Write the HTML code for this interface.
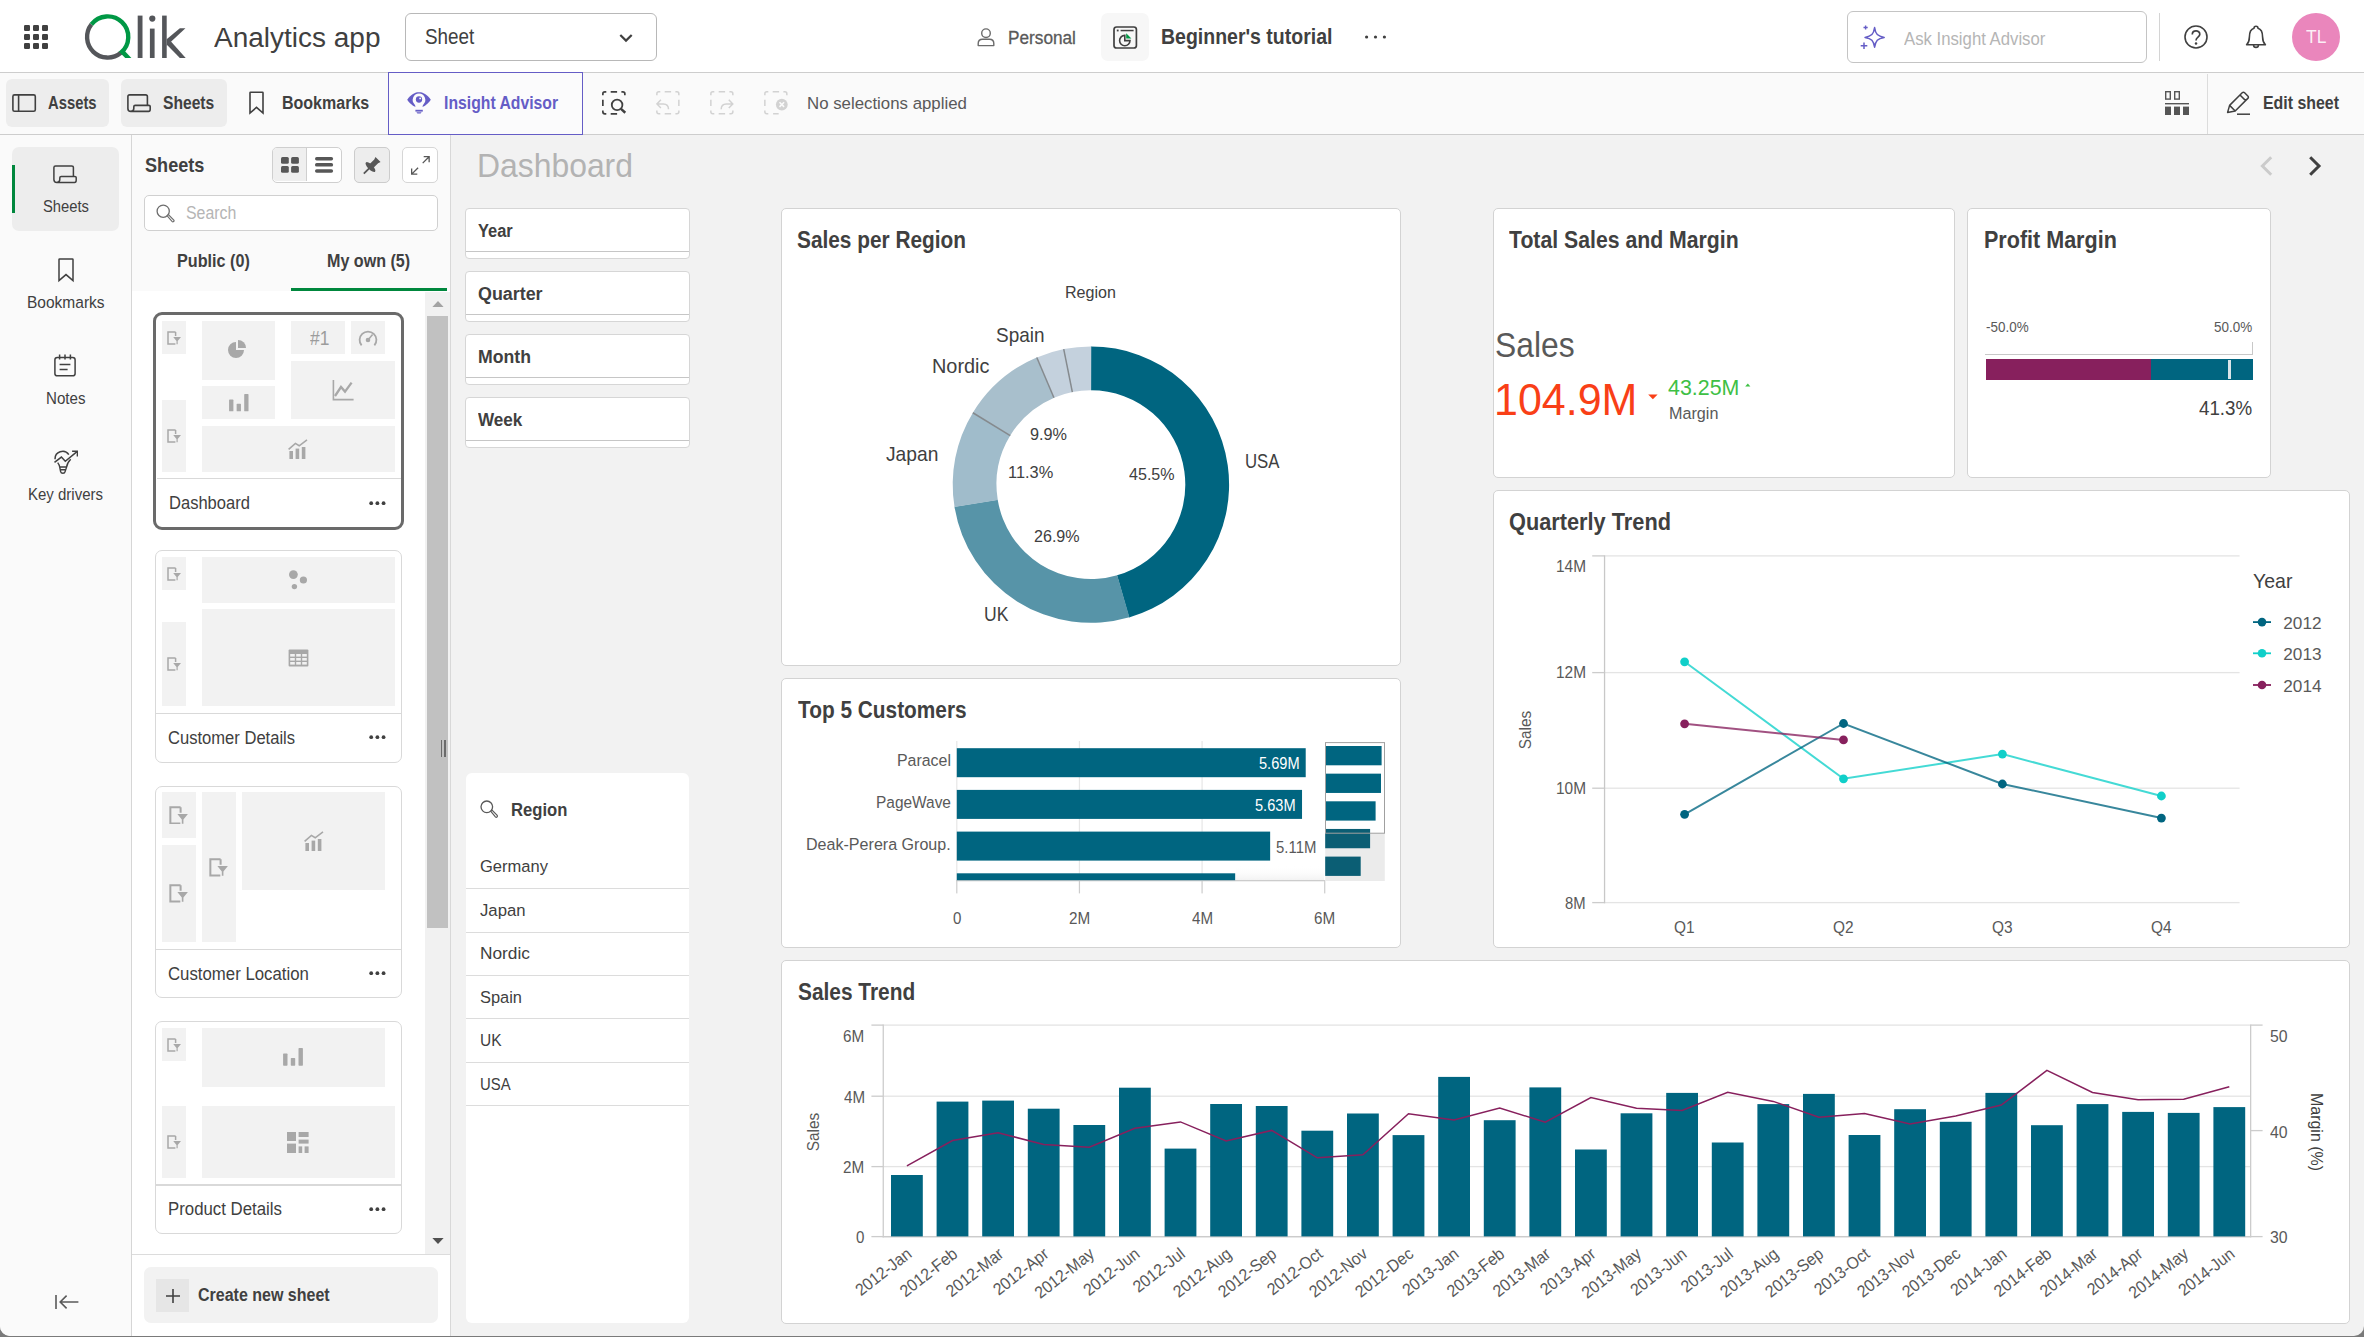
<!DOCTYPE html><html><head><meta charset="utf-8"><title>Qlik Sense - Dashboard</title><style>html,body{margin:0;padding:0;}
body{width:2364px;height:1337px;overflow:hidden;background:#7a7a7a;font-family:"Liberation Sans",sans-serif;position:relative;}
#app{position:absolute;left:0;top:0;width:2364px;height:1335.6px;overflow:hidden;background:#f2f2f2;border-radius:0 0 10px 10px;}
.a{position:absolute;display:block;}
.t{position:absolute;display:block;white-space:nowrap;line-height:40px;transform-origin:0 50%;}
</style></head><body><div id="app">
<div class="a" style="left:0.00px;top:0.00px;width:2364.00px;height:72.00px;background:#fff;"></div>
<div class="a" style="left:0.00px;top:72.00px;width:2364.00px;height:1.00px;background:#cdcdcd;"></div>
<svg class="a" style="left:24.00px;top:25.40px;" width="24.00" height="24.00" viewBox="0 0 24 24"><rect x="0" y="0" width="6" height="6" rx="1.2" fill="#404040"/><rect x="9" y="0" width="6" height="6" rx="1.2" fill="#404040"/><rect x="18" y="0" width="6" height="6" rx="1.2" fill="#404040"/><rect x="0" y="9" width="6" height="6" rx="1.2" fill="#404040"/><rect x="9" y="9" width="6" height="6" rx="1.2" fill="#404040"/><rect x="18" y="9" width="6" height="6" rx="1.2" fill="#404040"/><rect x="0" y="18" width="6" height="6" rx="1.2" fill="#404040"/><rect x="9" y="18" width="6" height="6" rx="1.2" fill="#404040"/><rect x="18" y="18" width="6" height="6" rx="1.2" fill="#404040"/></svg>
<svg class="a" style="left:85.40px;top:15.00px;overflow:visible;" width="105.00" height="46.00" viewBox="0 0 105 46">
<path d="M35.89 37.78 A20.6 20.6 0 0 1 6.42 9.32" fill="none" stroke="#54565a" stroke-width="4.4"/>
<path d="M6.42 9.32 A20.6 20.6 0 1 1 35.89 37.78" fill="none" stroke="#009845" stroke-width="4.4"/>
<path d="M33.5 36.2 L39.78 36.0 L46.38 43 H40.29 Z" fill="#009845"/>
<rect x="52.7" y="0.6" width="4.8" height="42.4" fill="#54565a"/>
<rect x="64.9" y="13.6" width="4.7" height="29.4" fill="#54565a"/>
<circle cx="67.3" cy="3.6" r="3.1" fill="#54565a"/>
<rect x="77.1" y="0.6" width="4.6" height="42.4" fill="#54565a"/>
<path d="M81.66 24.22 L94.85 13.3 H100.44 L81.66 30.82 Z" fill="#54565a"/>
<path d="M81.66 29.55 L85.97 26.5 L100.69 43 H94.85 Z" fill="#54565a"/>
</svg>
<span class="t" style="left:213.50px;top:17px;font-size:28.40px;color:#404040;transform:scaleX(0.9857);">Analytics app</span>
<div class="a" style="left:405.00px;top:13.00px;width:252.00px;height:48.00px;background:#fff;border:1.3px solid #b8b8b8;border-radius:6px;box-sizing:border-box;"></div>
<span class="t" style="left:424.50px;top:17px;font-size:21.20px;color:#404040;transform:scaleX(0.8899);">Sheet</span>
<svg class="a" style="left:618.00px;top:32.00px;" width="16.00" height="12.00" viewBox="0 0 16 12"><path d="M2.3 3 L8 8.6 L13.7 3" fill="none" stroke="#404040" stroke-width="2.2"/></svg>
<svg class="a" style="left:975.00px;top:26.00px;" width="22.00" height="22.00" viewBox="0 0 22 22"><circle cx="11" cy="7.2" r="4.3" fill="none" stroke="#6b6b6b" stroke-width="1.4"/><path d="M3.2 19.6 V17.5 Q3.2 13.2 7.5 13.2 H14.5 Q18.8 13.2 18.8 17.5 V19.6 Z" fill="none" stroke="#6b6b6b" stroke-width="1.4" stroke-linejoin="round"/></svg>
<span class="t" style="left:1008.00px;top:18px;font-size:18.30px;color:#595959;transform:scaleX(0.9415);-webkit-text-stroke:0.3px #595959;">Personal</span>
<div class="a" style="left:1101.00px;top:13.00px;width:48.00px;height:48.00px;background:#f7f7f7;border-radius:7px;"></div>
<svg class="a" style="left:1113.00px;top:26.00px;" width="25.00" height="24.00" viewBox="0 0 25 24"><rect x="1" y="1" width="22.4" height="21" rx="2.6" fill="none" stroke="#404040" stroke-width="1.7"/>
<rect x="3.8" y="3.6" width="1.8" height="1.8" fill="#404040"/><rect x="7.6" y="3.8" width="13" height="1.5" fill="#404040"/>
<path d="M11.8 9.4 A5.2 5.2 0 1 0 17 14.6 H11.8 Z" fill="none" stroke="#404040" stroke-width="1.6"/>
<path d="M13.2 7.2 L18.4 12.6 H13.2 Z" fill="#009845"/></svg>
<span class="t" style="left:1161.00px;top:17px;font-size:21.20px;color:#404040;font-weight:700;transform:scaleX(0.9199);">Beginner's tutorial</span>
<svg class="a" style="left:1364.00px;top:34.00px;" width="24.00" height="6.00" viewBox="0 0 24 6"><circle cx="2.6" cy="3" r="1.6" fill="#404040"/><circle cx="11.5" cy="3" r="1.6" fill="#404040"/><circle cx="20.4" cy="3" r="1.6" fill="#404040"/></svg>
<div class="a" style="left:1847.00px;top:11.00px;width:300.00px;height:51.50px;background:#fff;border:1.3px solid #c4c4c4;border-radius:6px;box-sizing:border-box;"></div>
<svg class="a" style="left:1860.00px;top:24.60px;" width="26.00" height="25.00" viewBox="0 0 26 25"><path d="M14.6 2.6 C15.6 9.2 17.6 11.4 24.2 12.4 C17.6 13.4 15.6 15.6 14.6 22.2 C13.6 15.6 11.6 13.4 5 12.4 C11.6 11.4 13.6 9.2 14.6 2.6 Z" fill="none" stroke="#655dc6" stroke-width="1.5" stroke-linejoin="round"/>
<path d="M4 17.4 V24 M0.7 20.7 H7.3" stroke="#655dc6" stroke-width="1.5" fill="none"/>
<path d="M5.6 0.4 V4.6 M3.5 2.5 H7.7" stroke="#655dc6" stroke-width="1.4" fill="none"/></svg>
<span class="t" style="left:1903.50px;top:19px;font-size:18.30px;color:#b5b5b5;transform:scaleX(0.9152);">Ask Insight Advisor</span>
<div class="a" style="left:2159.00px;top:13.00px;width:1.30px;height:48.00px;background:#d4d4d4;"></div>
<svg class="a" style="left:2184.00px;top:25.00px;" width="24.00" height="24.00" viewBox="0 0 24 24"><circle cx="12" cy="12" r="11" fill="none" stroke="#404040" stroke-width="1.6"/>
<path d="M8.3 9.4 C8.3 4.8 15.8 4.8 15.8 9.2 C15.8 12.2 12 12 12 15.4" fill="none" stroke="#404040" stroke-width="1.7"/><circle cx="12" cy="18.6" r="1.25" fill="#404040"/></svg>
<svg class="a" style="left:2243.50px;top:24.60px;" width="24.00" height="25.00" viewBox="0 0 24 25"><path d="M10 3.2 C10 0.6 14 0.6 14 3.2 C18.4 4.4 18.6 8.6 18.6 12 C18.6 16 19.6 18 21.4 19.8 H2.6 C4.4 18 5.4 16 5.4 12 C5.4 8.6 5.6 4.4 10 3.2 Z" fill="none" stroke="#404040" stroke-width="1.6" stroke-linejoin="round"/>
<path d="M9.6 20 C9.6 23.2 14.4 23.2 14.4 20" fill="none" stroke="#404040" stroke-width="1.6"/></svg>
<div class="a" style="left:2292.00px;top:13.00px;width:48.00px;height:48.00px;background:#ea86bc;border-radius:50%;"></div>
<span class="t" style="left:2305.80px;top:17px;font-size:18.60px;color:rgba(255,255,255,0.88);transform:scaleX(0.9398);">TL</span>
<div class="a" style="left:0.00px;top:73.00px;width:2364.00px;height:61.00px;background:#fafafa;"></div>
<div class="a" style="left:0.00px;top:134.00px;width:2364.00px;height:1.00px;background:#cdcdcd;"></div>
<div class="a" style="left:6.00px;top:79.00px;width:103.00px;height:48.00px;background:#ededed;border-radius:6px;"></div>
<div class="a" style="left:121.00px;top:79.00px;width:106.00px;height:48.00px;background:#ededed;border-radius:6px;"></div>
<svg class="a" style="left:12.00px;top:94.00px;" width="25.00" height="19.00" viewBox="0 0 25 19"><rect x="0.9" y="0.9" width="22.4" height="16.4" rx="1.6" fill="none" stroke="#404040" stroke-width="1.6"/><path d="M6.6 1 V17.2" stroke="#404040" stroke-width="1.6"/></svg>
<span class="t" style="left:48.20px;top:83px;font-size:18.30px;color:#404040;font-weight:700;transform:scaleX(0.8097);">Assets</span>
<svg class="a" style="left:127.00px;top:94.00px;" width="25.00" height="19.00" viewBox="0 0 25 19"><path d="M3.4 17.4 H21.6 Q23.2 17.4 23.2 15.2 V12.6 Q23.2 11.4 21.8 11.4 H8.2 Q6.8 11.4 6.8 12.8 V14.6 Q6.8 17.4 3.8 17.4 Q0.9 17.4 0.9 14.4 V2.6 Q0.9 0.9 2.6 0.9 H18.6 Q20.4 0.9 20.4 2.6 V11.2" fill="none" stroke="#404040" stroke-width="1.6" stroke-linejoin="round"/></svg>
<span class="t" style="left:163.30px;top:83px;font-size:18.30px;color:#404040;font-weight:700;transform:scaleX(0.8548);">Sheets</span>
<svg class="a" style="left:249.40px;top:91.00px;" width="16.00" height="24.00" viewBox="0 0 16 24"><path d="M1.6 1.2 H13.4 Q14 1.2 14 1.8 V22 L7.5 16.4 L1 22 V1.8 Q1 1.2 1.6 1.2 Z" fill="none" stroke="#404040" stroke-width="1.6" stroke-linejoin="miter"/></svg>
<span class="t" style="left:281.70px;top:83px;font-size:18.30px;color:#404040;font-weight:700;transform:scaleX(0.8758);">Bookmarks</span>
<div class="a" style="left:388.00px;top:72.00px;width:195.00px;height:63.00px;background:#fbfbfc;border:1.4px solid #655dc6;box-sizing:border-box;"></div>
<svg class="a" style="left:407.00px;top:92.20px;" width="24.00" height="21.50" viewBox="0 0 24 21.5"><path d="M0.2 7.8 C4 2 8 0.2 12 0.2 C16 0.2 20 2 23.8 7.8 C20 13.4 16 15.4 12 15.4 C8 15.4 4 13.4 0.2 7.8 Z" fill="#655dc6"/>
<path d="M12 1.6 A6.3 6.3 0 0 0 7.6 12.4 C8.4 13.4 8.5 14.6 8.5 16.9 H15.5 C15.5 14.6 15.6 13.4 16.4 12.4 A6.3 6.3 0 0 0 12 1.6 Z" fill="#fbfbfc"/>
<circle cx="12" cy="7.5" r="3.15" fill="#655dc6"/><circle cx="13.15" cy="6.4" r="0.95" fill="#fbfbfc"/>
<rect x="8.4" y="17.8" width="7.4" height="1.8" fill="#655dc6"/><path d="M9.4 20.3 H14.6 L13.6 21.5 H10.4 Z" fill="#655dc6"/></svg>
<span class="t" style="left:443.80px;top:83px;font-size:18.30px;color:#655dc6;font-weight:700;transform:scaleX(0.8618);">Insight Advisor</span>
<svg class="a" style="left:602.00px;top:91.00px;" width="25.00" height="25.00" viewBox="0 0 25 25"><path d="M0.85 4.3 V2.85 Q0.85 0.85 2.85 0.85 H4.3 M19.4 0.85 H20.85 Q22.85 0.85 22.85 2.85 V4.3 M0.85 19.4 V20.85 Q0.85 22.85 2.85 22.85 H4.3 M8.7 0.85 H15.1 M8.7 22.85 H15.1 M0.85 8.7 V15.1 " fill="none" stroke="#404040" stroke-width="1.7"/><circle cx="15.1" cy="13.9" r="5.3" fill="none" stroke="#404040" stroke-width="1.8"/><path d="M19 17.9 L23.3 21.8" stroke="#404040" stroke-width="2.5"/></svg>
<svg class="a" style="left:656.20px;top:91.00px;" width="25.00" height="25.00" viewBox="0 0 25 25"><path d="M0.85 4.3 V2.85 Q0.85 0.85 2.85 0.85 H4.3 M19.4 0.85 H20.85 Q22.85 0.85 22.85 2.85 V4.3 M0.85 19.4 V20.85 Q0.85 22.85 2.85 22.85 H4.3 M19.4 22.85 H20.85 Q22.85 22.85 22.85 20.85 V19.4 M8.7 0.85 H15.1 M8.7 22.85 H15.1 M22.85 8.7 V15.1 " fill="none" stroke="#d2d2d2" stroke-width="1.5"/><path d="M4.9 8.8 L0.9 12.9 L4.9 17 M1 12.9 H7.4 C10.4 12.9 12.5 15 12.5 18.2" fill="none" stroke="#d2d2d2" stroke-width="1.5"/></svg>
<svg class="a" style="left:710.10px;top:91.00px;" width="25.00" height="25.00" viewBox="0 0 25 25"><path d="M0.85 4.3 V2.85 Q0.85 0.85 2.85 0.85 H4.3 M19.4 0.85 H20.85 Q22.85 0.85 22.85 2.85 V4.3 M0.85 19.4 V20.85 Q0.85 22.85 2.85 22.85 H4.3 M19.4 22.85 H20.85 Q22.85 22.85 22.85 20.85 V19.4 M8.7 0.85 H15.1 M8.7 22.85 H15.1 M0.85 8.7 V15.1 " fill="none" stroke="#d2d2d2" stroke-width="1.5"/><path d="M18.8 8.8 L22.8 12.9 L18.8 17 M22.7 12.9 H16.3 C13.3 12.9 11.2 15 11.2 18.2" fill="none" stroke="#d2d2d2" stroke-width="1.5"/></svg>
<svg class="a" style="left:764.10px;top:91.00px;" width="25.00" height="25.00" viewBox="0 0 25 25"><path d="M0.85 4.3 V2.85 Q0.85 0.85 2.85 0.85 H4.3 M19.4 0.85 H20.85 Q22.85 0.85 22.85 2.85 V4.3 M0.85 19.4 V20.85 Q0.85 22.85 2.85 22.85 H4.3 M8.7 0.85 H15.1 M0.85 8.7 V15.1 M9.1 22.85 H14.7" fill="none" stroke="#d2d2d2" stroke-width="1.5"/><circle cx="17.8" cy="13.6" r="5.9" fill="#d2d2d2"/><path d="M15.5 11.3 L20.1 15.9 M20.1 11.3 L15.5 15.9" stroke="#fafafa" stroke-width="1.6"/></svg>
<span class="t" style="left:807.00px;top:83px;font-size:17.20px;color:#595959;transform:scaleX(0.9786);">No selections applied</span>
<svg class="a" style="left:2165.00px;top:91.00px;" width="24.00" height="24.00" viewBox="0 0 24 24"><rect x="0.7" y="0.7" width="4.6" height="7.4" fill="none" stroke="#555" stroke-width="1.4"/><rect x="9.7" y="0.7" width="4.6" height="7.4" fill="none" stroke="#555" stroke-width="1.4"/>
<rect x="0" y="12" width="24" height="1.4" fill="#555"/>
<rect x="0" y="15.6" width="6" height="8.4" fill="#555"/><rect x="9" y="15.6" width="6" height="8.4" fill="#555"/><rect x="18" y="15.6" width="6" height="8.4" fill="#555"/></svg>
<div class="a" style="left:2207.00px;top:73.50px;width:1.30px;height:60.50px;background:#dcdcdc;"></div>
<svg class="a" style="left:2226.00px;top:91.00px;" width="25.00" height="25.00" viewBox="0 0 25 25"><path d="M1.6 21.4 L3.6 14.4 L16.2 1.8 Q17.4 0.6 18.6 1.8 L21.8 5 Q23 6.2 21.8 7.4 L9.2 20 Z M3.6 14.4 L9.2 20 M14 4 L19.6 9.6" fill="none" stroke="#404040" stroke-width="1.5" stroke-linejoin="round"/>
<path d="M11 23.2 H24" stroke="#404040" stroke-width="1.5"/></svg>
<span class="t" style="left:2263.00px;top:83px;font-size:18.30px;color:#404040;font-weight:700;transform:scaleX(0.8690);">Edit sheet</span>
<div class="a" style="left:0.00px;top:135.00px;width:131.00px;height:1201.00px;background:#fafafa;"></div>
<div class="a" style="left:131.00px;top:135.00px;width:1.00px;height:1201.00px;background:#d6d6d6;"></div>
<div class="a" style="left:12.00px;top:147.00px;width:107.00px;height:84.00px;background:#ededed;border-radius:7px;"></div>
<div class="a" style="left:12.00px;top:165.00px;width:3.00px;height:48.00px;background:#00873d;"></div>
<svg class="a" style="left:52.70px;top:164.60px;" width="25.00" height="19.00" viewBox="0 0 25 19"><path d="M3.4 17.4 H21.6 Q23.2 17.4 23.2 15.2 V12.6 Q23.2 11.4 21.8 11.4 H8.2 Q6.8 11.4 6.8 12.8 V14.6 Q6.8 17.4 3.8 17.4 Q0.9 17.4 0.9 14.4 V2.6 Q0.9 0.9 2.6 0.9 H18.6 Q20.4 0.9 20.4 2.6 V11.2" fill="none" stroke="#404040" stroke-width="1.5" stroke-linejoin="round"/></svg>
<span class="t" style="left:42.50px;top:186px;font-size:17.20px;color:#404040;transform:scaleX(0.8590);">Sheets</span>
<svg class="a" style="left:57.60px;top:258.00px;" width="17.00" height="25.00" viewBox="0 0 17 25"><path d="M1.6 1 H14.4 Q15 1 15 1.6 V22.6 L8 16.6 L1 22.6 V1.6 Q1 1 1.6 1 Z" fill="none" stroke="#404040" stroke-width="1.5"/></svg>
<span class="t" style="left:26.70px;top:282px;font-size:17.20px;color:#404040;transform:scaleX(0.9021);">Bookmarks</span>
<svg class="a" style="left:54.30px;top:353.60px;" width="22.00" height="23.00" viewBox="0 0 22 23"><rect x="0.9" y="3.4" width="20.2" height="18.4" rx="2.4" fill="none" stroke="#404040" stroke-width="1.5"/>
<path d="M5.6 0.6 V5.6 M11 0.6 V5.6 M16.4 0.6 V5.6 M5.6 10.6 H16.4 M5.6 15.6 H13.6" stroke="#404040" stroke-width="1.5" fill="none"/></svg>
<span class="t" style="left:45.75px;top:378px;font-size:17.20px;color:#404040;transform:scaleX(0.8791);">Notes</span>
<svg class="a" style="left:54.00px;top:449.00px;" width="24.00" height="26.00" viewBox="0 0 24 26"><g transform="translate(0,0.8)"><path d="M1.1 9.5 A7.5 7.5 0 0 1 14.8 4.8" fill="none" stroke="#404040" stroke-width="1.5"/>
<path d="M0.5 12.6 L7.4 7.3 L11.3 11.5 L23 1.9 M18.1 1.5 H23.4 V6.8" fill="none" stroke="#404040" stroke-width="1.5" stroke-linejoin="miter"/></g>
<path d="M3.7 13.7 C5 15.5 5.5 16.6 5.7 18 L6.6 22.6 Q7 24.3 8.9 24.3 Q10.8 24.3 11.1 22.6 L12.5 18.4 C12.8 15.6 14 13 16.7 10.3 M5.8 18 H12.5 M6.2 20.7 H12" fill="none" stroke="#404040" stroke-width="1.4" stroke-linejoin="round"/></svg>
<span class="t" style="left:28.00px;top:474px;font-size:17.20px;color:#404040;transform:scaleX(0.8718);">Key drivers</span>
<svg class="a" style="left:54.60px;top:1294.00px;" width="24.00" height="16.00" viewBox="0 0 24 16"><path d="M1 1 V15 M23.4 8 H5.4 M11.6 1.6 L5.2 8 L11.6 14.4" fill="none" stroke="#595959" stroke-width="1.6"/></svg>
<div class="a" style="left:132.00px;top:135.00px;width:318.00px;height:156.60px;background:#fafafa;"></div>
<div class="a" style="left:132.00px;top:291.00px;width:318.00px;height:1045.00px;background:#fff;"></div>
<div class="a" style="left:450.00px;top:135.00px;width:1.00px;height:1201.00px;background:#d8d8d8;"></div>
<span class="t" style="left:144.60px;top:145px;font-size:20.60px;color:#404040;font-weight:700;transform:scaleX(0.8793);">Sheets</span>
<div class="a" style="left:272.00px;top:147.00px;width:69.80px;height:35.70px;background:#fff;border:1.2px solid #cfcfcf;border-radius:5px;box-sizing:border-box;overflow:hidden;"></div>
<div class="a" style="left:273.20px;top:148.20px;width:33.00px;height:33.30px;background:#efefef;border-radius:4px 0 0 4px;border-right:1.2px solid #cfcfcf;"></div>
<svg class="a" style="left:281.00px;top:157.10px;" width="18.00" height="16.00" viewBox="0 0 18 16"><rect x="0" y="0" width="7.8" height="6.7" rx="1.5" fill="#575757"/><rect x="0" y="9.1" width="7.8" height="6.7" rx="1.5" fill="#575757"/><rect x="10.1" y="0" width="7.8" height="6.7" rx="1.5" fill="#575757"/><rect x="10.1" y="9.1" width="7.8" height="6.7" rx="1.5" fill="#575757"/></svg>
<svg class="a" style="left:314.90px;top:157.10px;" width="19.00" height="16.00" viewBox="0 0 19 16"><rect x="0" y="0" width="18.1" height="3.5" rx="1.7" fill="#575757"/><rect x="0" y="6.1" width="18.1" height="3.5" rx="1.7" fill="#575757"/><rect x="0" y="12.2" width="18.1" height="3.5" rx="1.7" fill="#575757"/></svg>
<div class="a" style="left:354.00px;top:147.00px;width:35.60px;height:35.70px;background:#ededed;border:1.2px solid #cccccc;border-radius:5px;box-sizing:border-box;"></div>
<svg class="a" style="left:0;top:0" width="460" height="200"><g transform="translate(370.1,167.4) rotate(-45)"><path d="M-8.9 0 H-1" stroke="#575757" stroke-width="1.8"/><ellipse cx="0.5" cy="0" rx="2.5" ry="6.5" fill="#575757"/><path d="M1.4 -2.7 H8.6 L11.2 -3.6 V3.6 L8.6 2.7 H1.4 Z" fill="#575757"/></g></svg>
<div class="a" style="left:402.30px;top:147.00px;width:35.40px;height:35.70px;background:#fff;border:1.2px solid #d6d6d6;border-radius:5px;box-sizing:border-box;"></div>
<svg class="a" style="left:410.60px;top:155.60px;" width="19.00" height="19.00" viewBox="0 0 19 19"><path d="M11.7 7.1 L18.1 0.7 M12.7 0.65 H18.15 V6.3 M7.1 11.7 L0.7 18.1 M0.65 12.6 V18.15 H6.3" fill="none" stroke="#575757" stroke-width="1.3"/></svg>
<div class="a" style="left:144.40px;top:195.20px;width:293.40px;height:35.50px;background:#fff;border:1.2px solid #d0d0d0;border-radius:5px;box-sizing:border-box;"></div>
<svg class="a" style="left:155.60px;top:203.60px;" width="19.00" height="19.00" viewBox="0 0 19 19"><circle cx="7.2" cy="7.2" r="6.1" fill="none" stroke="#6e6e6e" stroke-width="1.3"/><path d="M11.2 11.8 L12.4 10.6 L17.8 16 Q18.4 17 17.6 17.6 Q16.8 18.2 16 17.4 Z" fill="#fff" stroke="#6e6e6e" stroke-width="1.2"/></svg>
<span class="t" style="left:186.40px;top:193px;font-size:18.30px;color:#b5b5b5;transform:scaleX(0.8692);">Search</span>
<span class="t" style="left:176.50px;top:241px;font-size:17.60px;color:#404040;font-weight:700;transform:scaleX(0.9191);">Public (0)</span>
<span class="t" style="left:327.30px;top:241px;font-size:17.60px;color:#404040;font-weight:700;transform:scaleX(0.9150);">My own (5)</span>
<div class="a" style="left:291.00px;top:288.00px;width:156.00px;height:3.00px;background:#00873d;"></div>
<div class="a" style="left:425.00px;top:291.60px;width:25.00px;height:962.00px;background:#f1f1f1;"></div>
<div class="a" style="left:427.00px;top:316.00px;width:21.00px;height:612.00px;background:#c1c1c1;"></div>
<svg class="a" style="left:431.60px;top:300.00px;" width="12.00" height="8.00" viewBox="0 0 12 8"><path d="M0.4 7 L6 1 L11.6 7 Z" fill="#a3a3a3"/></svg>
<svg class="a" style="left:431.60px;top:1237.00px;" width="12.00" height="8.00" viewBox="0 0 12 8"><path d="M0.4 1 L6 7 L11.6 1 Z" fill="#505050"/></svg>
<div class="a" style="left:441.00px;top:740.00px;width:1.20px;height:17.00px;background:#6b6b6b;"></div>
<div class="a" style="left:444.40px;top:740.00px;width:1.20px;height:17.00px;background:#6b6b6b;"></div>
<div class="a" style="left:132.40px;top:1253.50px;width:318.00px;height:1.30px;background:#dcdcdc;"></div>
<div class="a" style="left:153.40px;top:312.40px;width:250.40px;height:217.40px;background:#fff;border:3.2px solid #6a6a6a;border-radius:9px;box-sizing:border-box;"></div>
<div class="a" style="left:161.80px;top:321.40px;width:24.40px;height:32.80px;background:#f2f2f2;"></div><svg class="a" style="left:167.00px;top:330.80px;" width="14.00" height="14.00" viewBox="0 0 14 14"><path d="M8.6 1 H1 V13 H8.4 M8.6 1 V5" fill="none" stroke="#a8a8a8" stroke-width="1.5"/><path d="M6.2 6 H14 L10.7 10 V13.2 H9.5 V10 Z" fill="#a8a8a8"/></svg>
<div class="a" style="left:201.70px;top:321.40px;width:73.60px;height:58.80px;background:#f2f2f2;"></div><svg class="a" style="left:226.50px;top:339.20px;" width="20.00" height="20.00" viewBox="0 0 20 20"><path d="M9 3 A8 8 0 1 0 17 11 H9 Z" fill="#a8a8a8"/><path d="M11 1 A8 8 0 0 1 19 9 H11 Z" fill="#a8a8a8"/></svg>
<div class="a" style="left:291.40px;top:321.40px;width:53.70px;height:32.80px;background:#f2f2f2;"></div>
<span class="t" style="left:309.90px;top:318px;font-size:21.00px;color:#9c9c9c;transform:scaleX(0.8305);">#1</span>
<div class="a" style="left:350.90px;top:321.40px;width:34.10px;height:32.80px;background:#f2f2f2;"></div><svg class="a" style="left:357.95px;top:328.80px;" width="20.00" height="18.00" viewBox="0 0 20 18"><path d="M3.6 16.4 A8.4 8.4 0 1 1 16.4 16.4" fill="none" stroke="#a8a8a8" stroke-width="1.8"/><circle cx="10" cy="11" r="2.3" fill="#a8a8a8"/><path d="M10 11 L14.6 5.6" stroke="#a8a8a8" stroke-width="1.6"/></svg>
<div class="a" style="left:291.40px;top:360.60px;width:103.60px;height:58.90px;background:#f2f2f2;"></div><svg class="a" style="left:332.20px;top:379.05px;" width="22.00" height="22.00" viewBox="0 0 22 22"><path d="M1.4 1 V20.6 H21.6" fill="none" stroke="#a8a8a8" stroke-width="1.6"/><path d="M3 17 L9 8 L13 12.6 L19.6 3.6" fill="none" stroke="#a8a8a8" stroke-width="2.3"/></svg>
<div class="a" style="left:201.70px;top:386.40px;width:73.60px;height:33.10px;background:#f2f2f2;"></div><svg class="a" style="left:227.70px;top:393.23px;" width="21.60" height="19.44" viewBox="0 0 20 18"><rect x="1" y="6" width="4" height="11" rx="0.6" fill="#a8a8a8"/><rect x="8" y="10" width="4" height="7" rx="0.6" fill="#a8a8a8"/><rect x="15" y="1" width="4" height="16" rx="0.6" fill="#a8a8a8"/></svg>
<div class="a" style="left:161.80px;top:399.50px;width:24.40px;height:72.10px;background:#f2f2f2;"></div><svg class="a" style="left:167.00px;top:428.55px;" width="14.00" height="14.00" viewBox="0 0 14 14"><path d="M8.6 1 H1 V13 H8.4 M8.6 1 V5" fill="none" stroke="#a8a8a8" stroke-width="1.5"/><path d="M6.2 6 H14 L10.7 10 V13.2 H9.5 V10 Z" fill="#a8a8a8"/></svg>
<div class="a" style="left:201.70px;top:425.90px;width:193.30px;height:45.70px;background:#f2f2f2;"></div><svg class="a" style="left:288.35px;top:438.75px;" width="20.00" height="20.00" viewBox="0 0 20 20"><rect x="1.4" y="12" width="3.6" height="8" fill="#a8a8a8"/><rect x="7.6" y="9.6" width="3.6" height="10.4" fill="#a8a8a8"/><rect x="13.8" y="8" width="3.6" height="12" fill="#a8a8a8"/><path d="M0.6 10.4 L7.4 4.4 L11.2 6.8 L19 0.8" fill="none" stroke="#a8a8a8" stroke-width="1.6"/></svg>
<div class="a" style="left:156.60px;top:478.00px;width:244.00px;height:1.20px;background:#d9d9d9;"></div>
<span class="t" style="left:168.60px;top:483px;font-size:18.30px;color:#404040;transform:scaleX(0.9048);">Dashboard</span>
<svg class="a" style="left:368.80px;top:500.80px;" width="17.00" height="4.40" viewBox="0 0 17 4.4"><circle cx="2.2" cy="2.2" r="1.9" fill="#404040"/><circle cx="8.4" cy="2.2" r="1.9" fill="#404040"/><circle cx="14.6" cy="2.2" r="1.9" fill="#404040"/></svg>
<div class="a" style="left:155.20px;top:550.20px;width:246.60px;height:212.40px;background:#fff;border:1.2px solid #d9d9d9;border-radius:7px;box-sizing:border-box;"></div>
<div class="a" style="left:162.00px;top:557.00px;width:23.90px;height:33.00px;background:#f2f2f2;"></div><svg class="a" style="left:166.95px;top:566.50px;" width="14.00" height="14.00" viewBox="0 0 14 14"><path d="M8.6 1 H1 V13 H8.4 M8.6 1 V5" fill="none" stroke="#a8a8a8" stroke-width="1.5"/><path d="M6.2 6 H14 L10.7 10 V13.2 H9.5 V10 Z" fill="#a8a8a8"/></svg>
<div class="a" style="left:201.70px;top:557.00px;width:193.30px;height:45.80px;background:#f2f2f2;"></div><svg class="a" style="left:288.35px;top:569.90px;" width="20.00" height="20.00" viewBox="0 0 20 20"><circle cx="5.4" cy="4.6" r="4.4" fill="#a8a8a8"/><circle cx="15.4" cy="10" r="3.6" fill="#a8a8a8"/><circle cx="6.4" cy="16.6" r="2.7" fill="#a8a8a8"/></svg>
<div class="a" style="left:162.00px;top:622.00px;width:23.90px;height:84.40px;background:#f2f2f2;"></div><svg class="a" style="left:166.95px;top:657.20px;" width="14.00" height="14.00" viewBox="0 0 14 14"><path d="M8.6 1 H1 V13 H8.4 M8.6 1 V5" fill="none" stroke="#a8a8a8" stroke-width="1.5"/><path d="M6.2 6 H14 L10.7 10 V13.2 H9.5 V10 Z" fill="#a8a8a8"/></svg>
<div class="a" style="left:201.70px;top:609.40px;width:193.30px;height:97.00px;background:#f2f2f2;"></div><svg class="a" style="left:287.85px;top:648.90px;" width="21.00" height="18.00" viewBox="0 0 21 18"><rect x="0.6" y="0.6" width="19.8" height="16.8" rx="1" fill="#a8a8a8"/><rect x="2.2" y="5" width="4.6" height="2.6" fill="#f2f2f2"/><rect x="8.2" y="5" width="4.6" height="2.6" fill="#f2f2f2"/><rect x="14.2" y="5" width="4.6" height="2.6" fill="#f2f2f2"/><rect x="2.2" y="9" width="4.6" height="2.6" fill="#f2f2f2"/><rect x="8.2" y="9" width="4.6" height="2.6" fill="#f2f2f2"/><rect x="14.2" y="9" width="4.6" height="2.6" fill="#f2f2f2"/><rect x="2.2" y="13" width="4.6" height="2.6" fill="#f2f2f2"/><rect x="8.2" y="13" width="4.6" height="2.6" fill="#f2f2f2"/><rect x="14.2" y="13" width="4.6" height="2.6" fill="#f2f2f2"/></svg>
<div class="a" style="left:156.40px;top:713.20px;width:244.20px;height:1.20px;background:#d9d9d9;"></div>
<span class="t" style="left:168.00px;top:718px;font-size:18.30px;color:#404040;transform:scaleX(0.9064);">Customer Details</span>
<svg class="a" style="left:368.80px;top:735.40px;" width="17.00" height="4.40" viewBox="0 0 17 4.4"><circle cx="2.2" cy="2.2" r="1.9" fill="#404040"/><circle cx="8.4" cy="2.2" r="1.9" fill="#404040"/><circle cx="14.6" cy="2.2" r="1.9" fill="#404040"/></svg>
<div class="a" style="left:155.20px;top:785.60px;width:246.60px;height:212.40px;background:#fff;border:1.2px solid #d9d9d9;border-radius:7px;box-sizing:border-box;"></div>
<div class="a" style="left:162.00px;top:792.20px;width:33.70px;height:45.70px;background:#f2f2f2;"></div><svg class="a" style="left:169.40px;top:805.60px;" width="18.90" height="18.90" viewBox="0 0 14 14"><path d="M8.6 1 H1 V13 H8.4 M8.6 1 V5" fill="none" stroke="#a8a8a8" stroke-width="1.5"/><path d="M6.2 6 H14 L10.7 10 V13.2 H9.5 V10 Z" fill="#a8a8a8"/></svg>
<div class="a" style="left:162.00px;top:844.60px;width:33.70px;height:97.70px;background:#f2f2f2;"></div><svg class="a" style="left:169.40px;top:884.00px;" width="18.90" height="18.90" viewBox="0 0 14 14"><path d="M8.6 1 H1 V13 H8.4 M8.6 1 V5" fill="none" stroke="#a8a8a8" stroke-width="1.5"/><path d="M6.2 6 H14 L10.7 10 V13.2 H9.5 V10 Z" fill="#a8a8a8"/></svg>
<div class="a" style="left:201.70px;top:792.20px;width:34.10px;height:150.10px;background:#f2f2f2;"></div><svg class="a" style="left:209.30px;top:857.80px;" width="18.90" height="18.90" viewBox="0 0 14 14"><path d="M8.6 1 H1 V13 H8.4 M8.6 1 V5" fill="none" stroke="#a8a8a8" stroke-width="1.5"/><path d="M6.2 6 H14 L10.7 10 V13.2 H9.5 V10 Z" fill="#a8a8a8"/></svg>
<div class="a" style="left:241.80px;top:792.20px;width:143.40px;height:98.10px;background:#f2f2f2;"></div><svg class="a" style="left:303.50px;top:831.25px;" width="20.00" height="20.00" viewBox="0 0 20 20"><rect x="1.4" y="12" width="3.6" height="8" fill="#a8a8a8"/><rect x="7.6" y="9.6" width="3.6" height="10.4" fill="#a8a8a8"/><rect x="13.8" y="8" width="3.6" height="12" fill="#a8a8a8"/><path d="M0.6 10.4 L7.4 4.4 L11.2 6.8 L19 0.8" fill="none" stroke="#a8a8a8" stroke-width="1.6"/></svg>
<div class="a" style="left:156.40px;top:949.20px;width:244.20px;height:1.20px;background:#d9d9d9;"></div>
<span class="t" style="left:168.00px;top:954px;font-size:18.30px;color:#404040;transform:scaleX(0.9180);">Customer Location</span>
<svg class="a" style="left:368.80px;top:971.00px;" width="17.00" height="4.40" viewBox="0 0 17 4.4"><circle cx="2.2" cy="2.2" r="1.9" fill="#404040"/><circle cx="8.4" cy="2.2" r="1.9" fill="#404040"/><circle cx="14.6" cy="2.2" r="1.9" fill="#404040"/></svg>
<div class="a" style="left:155.20px;top:1021.20px;width:246.60px;height:212.40px;background:#fff;border:1.2px solid #d9d9d9;border-radius:7px;box-sizing:border-box;"></div>
<div class="a" style="left:161.80px;top:1028.00px;width:24.20px;height:33.00px;background:#f2f2f2;"></div><svg class="a" style="left:166.90px;top:1037.50px;" width="14.00" height="14.00" viewBox="0 0 14 14"><path d="M8.6 1 H1 V13 H8.4 M8.6 1 V5" fill="none" stroke="#a8a8a8" stroke-width="1.5"/><path d="M6.2 6 H14 L10.7 10 V13.2 H9.5 V10 Z" fill="#a8a8a8"/></svg>
<div class="a" style="left:201.70px;top:1028.00px;width:183.30px;height:58.50px;background:#f2f2f2;"></div><svg class="a" style="left:282.35px;top:1047.35px;" width="22.00" height="19.80" viewBox="0 0 20 18"><rect x="1" y="6" width="4" height="11" rx="0.6" fill="#a8a8a8"/><rect x="8" y="10" width="4" height="7" rx="0.6" fill="#a8a8a8"/><rect x="15" y="1" width="4" height="16" rx="0.6" fill="#a8a8a8"/></svg>
<div class="a" style="left:161.80px;top:1106.10px;width:24.20px;height:71.90px;background:#f2f2f2;"></div><svg class="a" style="left:166.90px;top:1135.05px;" width="14.00" height="14.00" viewBox="0 0 14 14"><path d="M8.6 1 H1 V13 H8.4 M8.6 1 V5" fill="none" stroke="#a8a8a8" stroke-width="1.5"/><path d="M6.2 6 H14 L10.7 10 V13.2 H9.5 V10 Z" fill="#a8a8a8"/></svg>
<div class="a" style="left:201.70px;top:1106.10px;width:193.30px;height:71.90px;background:#f2f2f2;"></div><svg class="a" style="left:287.35px;top:1131.55px;" width="22.00" height="21.00" viewBox="0 0 22 21"><rect x="0" y="0" width="9" height="9" fill="#a8a8a8"/><rect x="0" y="11.6" width="9" height="9.4" fill="#a8a8a8"/><rect x="11.6" y="0" width="10" height="5" fill="#a8a8a8"/><rect x="11.6" y="7.6" width="10" height="4" fill="#a8a8a8"/><rect x="11.6" y="14.4" width="3.6" height="6.6" fill="#a8a8a8"/><rect x="17.6" y="14.4" width="4" height="6.6" fill="#a8a8a8"/></svg>
<div class="a" style="left:156.40px;top:1184.40px;width:244.20px;height:1.20px;background:#d9d9d9;"></div>
<span class="t" style="left:168.40px;top:1189px;font-size:18.30px;color:#404040;transform:scaleX(0.9187);">Product Details</span>
<svg class="a" style="left:368.80px;top:1206.80px;" width="17.00" height="4.40" viewBox="0 0 17 4.4"><circle cx="2.2" cy="2.2" r="1.9" fill="#404040"/><circle cx="8.4" cy="2.2" r="1.9" fill="#404040"/><circle cx="14.6" cy="2.2" r="1.9" fill="#404040"/></svg>
<div class="a" style="left:144.20px;top:1267.00px;width:294.00px;height:56.40px;background:#f2f2f2;border-radius:7px;"></div>
<div class="a" style="left:156.00px;top:1279.00px;width:33.00px;height:33.00px;background:#e6e6e6;"></div>
<svg class="a" style="left:165.50px;top:1288.50px;" width="14.00" height="14.00" viewBox="0 0 14 14"><path d="M7 0 V14 M0 7 H14" stroke="#404040" stroke-width="1.6"/></svg>
<span class="t" style="left:198.40px;top:1275px;font-size:18.30px;color:#404040;font-weight:700;transform:scaleX(0.8756);">Create new sheet</span>
<span class="t" style="left:477.30px;top:146px;font-size:33.40px;color:#b3b3b3;transform:scaleX(0.9547);">Dashboard</span>
<svg class="a" style="left:2258.00px;top:155.00px;" width="18.00" height="22.00" viewBox="0 0 18 22"><path d="M13.2 2.2 L4.4 11 L13.2 19.8" fill="none" stroke="#cbcbcb" stroke-width="3"/></svg>
<svg class="a" style="left:2306.00px;top:155.00px;" width="18.00" height="22.00" viewBox="0 0 18 22"><path d="M4.2 2.2 L13 11 L4.2 19.8" fill="none" stroke="#404040" stroke-width="3"/></svg>
<div class="a" style="left:465.00px;top:208.00px;width:225.00px;height:51.00px;background:#fff;border:1px solid #d6d6d6;border-radius:4px;box-sizing:border-box;"></div>
<div class="a" style="left:466.00px;top:250.80px;width:223.00px;height:1.30px;background:#c6c6c6;"></div>
<span class="t" style="left:478.00px;top:211px;font-size:18.30px;color:#404040;font-weight:700;transform:scaleX(0.8998);">Year</span>
<div class="a" style="left:465.00px;top:271.00px;width:225.00px;height:51.00px;background:#fff;border:1px solid #d6d6d6;border-radius:4px;box-sizing:border-box;"></div>
<div class="a" style="left:466.00px;top:313.80px;width:223.00px;height:1.30px;background:#c6c6c6;"></div>
<span class="t" style="left:478.00px;top:274px;font-size:18.30px;color:#404040;font-weight:700;transform:scaleX(0.9772);">Quarter</span>
<div class="a" style="left:465.00px;top:334.00px;width:225.00px;height:51.00px;background:#fff;border:1px solid #d6d6d6;border-radius:4px;box-sizing:border-box;"></div>
<div class="a" style="left:466.00px;top:376.80px;width:223.00px;height:1.30px;background:#c6c6c6;"></div>
<span class="t" style="left:478.00px;top:337px;font-size:18.30px;color:#404040;font-weight:700;transform:scaleX(0.9659);">Month</span>
<div class="a" style="left:465.00px;top:397.00px;width:225.00px;height:51.00px;background:#fff;border:1px solid #d6d6d6;border-radius:4px;box-sizing:border-box;"></div>
<div class="a" style="left:466.00px;top:439.80px;width:223.00px;height:1.30px;background:#c6c6c6;"></div>
<span class="t" style="left:478.00px;top:400px;font-size:18.30px;color:#404040;font-weight:700;transform:scaleX(0.9352);">Week</span>
<div class="a" style="left:466.00px;top:773.00px;width:223.00px;height:550.00px;background:#fff;border-radius:6px;"></div>
<svg class="a" style="left:479.60px;top:800.40px;" width="19.00" height="19.00" viewBox="0 0 19 19"><circle cx="6.8" cy="6.8" r="5.8" fill="none" stroke="#595959" stroke-width="1.3"/><path d="M10.8 11.4 L12 10.2 L17.2 15.4 Q17.8 16.4 17 17 Q16.2 17.6 15.4 16.8 Z" fill="#fff" stroke="#595959" stroke-width="1.2"/></svg>
<span class="t" style="left:511.30px;top:790px;font-size:18.30px;color:#404040;font-weight:700;transform:scaleX(0.9111);">Region</span>
<span class="t" style="left:480.00px;top:846px;font-size:17.20px;color:#404040;transform:scaleX(0.9614);">Germany</span>
<div class="a" style="left:466.00px;top:888.00px;width:223.00px;height:1.00px;background:#dcdcdc;"></div>
<span class="t" style="left:480.00px;top:890px;font-size:17.20px;color:#404040;transform:scaleX(0.9730);">Japan</span>
<div class="a" style="left:466.00px;top:932.00px;width:223.00px;height:1.00px;background:#dcdcdc;"></div>
<span class="t" style="left:480.00px;top:933px;font-size:17.20px;color:#404040;transform:scaleX(1.0060);">Nordic</span>
<div class="a" style="left:466.00px;top:975.00px;width:223.00px;height:1.00px;background:#dcdcdc;"></div>
<span class="t" style="left:480.00px;top:977px;font-size:17.20px;color:#404040;transform:scaleX(0.9547);">Spain</span>
<div class="a" style="left:466.00px;top:1018.00px;width:223.00px;height:1.00px;background:#dcdcdc;"></div>
<span class="t" style="left:480.00px;top:1020px;font-size:17.20px;color:#404040;transform:scaleX(0.9040);">UK</span>
<div class="a" style="left:466.00px;top:1062.00px;width:223.00px;height:1.00px;background:#dcdcdc;"></div>
<span class="t" style="left:480.00px;top:1064px;font-size:17.20px;color:#404040;transform:scaleX(0.8652);">USA</span>
<div class="a" style="left:466.00px;top:1105.00px;width:223.00px;height:1.00px;background:#dcdcdc;"></div>
<div class="a" style="left:781.00px;top:208.00px;width:620.00px;height:458.00px;background:#fff;border:1px solid #d3d3d3;border-radius:5px;box-sizing:border-box;"></div>
<span class="t" style="left:797.20px;top:220px;font-size:23.00px;color:#404040;font-weight:700;transform:scaleX(0.9056);">Sales per Region</span>
<span class="t" style="left:1065.30px;top:273px;font-size:17.00px;color:#404040;transform:scaleX(0.9467);">Region</span>
<svg class="a" style="left:0;top:0" width="2364" height="1337"><path d="M1090.90 346.40 A138.20 138.20 0 0 1 1129.11 617.41 L1117.00 575.32 A94.40 94.40 0 0 0 1090.90 390.20 Z" fill="#006580"/><path d="M1129.46 617.31 A138.20 138.20 0 0 1 954.48 506.72 L997.72 499.71 A94.40 94.40 0 0 0 1117.24 575.25 Z" fill="#5794a8"/><path d="M954.54 507.08 A138.20 138.20 0 0 1 973.03 412.45 L1010.38 435.32 A94.40 94.40 0 0 0 997.76 499.95 Z" fill="#a0bccb"/><path d="M972.84 412.76 A138.20 138.20 0 0 1 1037.15 357.28 L1054.18 397.63 A94.40 94.40 0 0 0 1010.26 435.53 Z" fill="#a8bfcc"/><path d="M1036.81 357.42 A138.20 138.20 0 0 1 1064.08 349.03 L1072.58 391.99 A94.40 94.40 0 0 0 1053.95 397.73 Z" fill="#c4d1dd"/><path d="M1063.73 349.10 A138.20 138.20 0 0 1 1091.26 346.40 L1091.15 390.20 A94.40 94.40 0 0 0 1072.34 392.04 Z" fill="#c4d1dd"/><path d="M972.84 412.76 L1010.26 435.53" stroke="#858a8e" stroke-width="1.5"/><path d="M1036.81 357.42 L1053.95 397.73" stroke="#858a8e" stroke-width="1.5"/><path d="M1063.73 349.10 L1072.34 392.04" stroke="#858a8e" stroke-width="1.5"/></svg>
<span class="t" style="left:995.70px;top:315px;font-size:20.40px;color:#404040;transform:scaleX(0.9295);">Spain</span>
<span class="t" style="left:931.50px;top:346px;font-size:20.40px;color:#404040;transform:scaleX(0.9754);">Nordic</span>
<span class="t" style="left:885.90px;top:434px;font-size:20.40px;color:#404040;transform:scaleX(0.9427);">Japan</span>
<span class="t" style="left:983.90px;top:594px;font-size:20.40px;color:#404040;transform:scaleX(0.8610);">UK</span>
<span class="t" style="left:1244.80px;top:441px;font-size:20.40px;color:#404040;transform:scaleX(0.8225);">USA</span>
<span class="t" style="left:1029.50px;top:415px;font-size:17.00px;color:#404040;transform:scaleX(0.9549);">9.9%</span>
<span class="t" style="left:1007.60px;top:453px;font-size:17.00px;color:#404040;transform:scaleX(0.9629);">11.3%</span>
<span class="t" style="left:1128.50px;top:455px;font-size:17.00px;color:#404040;transform:scaleX(0.9460);">45.5%</span>
<span class="t" style="left:1034.10px;top:517px;font-size:17.00px;color:#404040;transform:scaleX(0.9460);">26.9%</span>
<div class="a" style="left:781.00px;top:678.00px;width:620.00px;height:270.00px;background:#fff;border:1px solid #d3d3d3;border-radius:5px;box-sizing:border-box;"></div>
<span class="t" style="left:797.60px;top:690px;font-size:23.00px;color:#404040;font-weight:700;transform:scaleX(0.9057);">Top 5 Customers</span>
<svg class="a" style="left:0;top:0" width="2364" height="1337"><defs><linearGradient id="fd" x1="0" y1="0" x2="0" y2="1"><stop offset="0" stop-color="#fff" stop-opacity="0"/><stop offset="1" stop-color="#e0e0e0" stop-opacity="0.4"/></linearGradient></defs><rect x="956.20" y="741" width="1.2" height="140" fill="#e6e6e6"/><rect x="1078.84" y="741" width="1.2" height="140" fill="#e6e6e6"/><rect x="1201.48" y="741" width="1.2" height="140" fill="#e6e6e6"/><rect x="956.2" y="880" width="368.6" height="1.3" fill="#cccccc"/><rect x="956.20" y="880" width="1.2" height="13.4" fill="#cccccc"/><rect x="1078.84" y="880" width="1.2" height="13.4" fill="#cccccc"/><rect x="1201.48" y="880" width="1.2" height="13.4" fill="#cccccc"/><rect x="1324.12" y="880" width="1.2" height="13.4" fill="#cccccc"/><rect x="956.80" y="748.20" width="348.91" height="29.00" fill="#006580"/><rect x="956.80" y="789.90" width="345.23" height="29.00" fill="#006580"/><rect x="956.80" y="831.60" width="313.35" height="29.00" fill="#006580"/><rect x="956.80" y="873.30" width="278.39" height="6.90" fill="#006580"/><rect x="1325.2" y="833.2" width="59.6" height="47.8" fill="#ebebeb"/><rect x="1325.2" y="746.00" width="56.40" height="19.3" fill="#006580"/><rect x="1325.2" y="773.65" width="55.80" height="19.3" fill="#006580"/><rect x="1325.2" y="801.30" width="50.40" height="19.3" fill="#006580"/><rect x="1325.2" y="828.95" width="44.90" height="19.3" fill="#0b5e74"/><rect x="1325.2" y="856.60" width="35.50" height="19.3" fill="#0b5e74"/><rect x="1325.5" y="742.6" width="59" height="90.6" fill="none" stroke="#a0a0a0" stroke-width="1"/><rect x="1236" y="866" width="88" height="14" fill="url(#fd)"/></svg>
<span class="t" style="left:897.20px;top:740px;font-size:17.40px;color:#595959;transform:scaleX(0.9153);">Paracel</span>
<span class="t" style="left:876.20px;top:782px;font-size:17.40px;color:#595959;transform:scaleX(0.8879);">PageWave</span>
<span class="t" style="left:806.40px;top:824px;font-size:17.40px;color:#595959;transform:scaleX(0.9242);">Deak-Perera Group.</span>
<span class="t" style="left:1258.60px;top:744px;font-size:15.60px;color:#fff;transform:scaleX(0.9364);">5.69M</span>
<span class="t" style="left:1255.00px;top:786px;font-size:15.60px;color:#fff;transform:scaleX(0.9364);">5.63M</span>
<span class="t" style="left:1276.20px;top:828px;font-size:15.60px;color:#595959;transform:scaleX(0.9574);">5.11M</span>
<span class="t" style="left:953.20px;top:899px;font-size:17.00px;color:#595959;transform:scaleX(0.8885);">0</span>
<span class="t" style="left:1069.00px;top:899px;font-size:17.00px;color:#595959;transform:scaleX(0.8977);">2M</span>
<span class="t" style="left:1191.70px;top:899px;font-size:17.00px;color:#595959;transform:scaleX(0.8892);">4M</span>
<span class="t" style="left:1314.00px;top:899px;font-size:17.00px;color:#595959;transform:scaleX(0.8977);">6M</span>
<div class="a" style="left:1493.00px;top:208.00px;width:462.00px;height:270.00px;background:#fff;border:1px solid #d3d3d3;border-radius:5px;box-sizing:border-box;"></div>
<span class="t" style="left:1509.20px;top:220px;font-size:23.00px;color:#404040;font-weight:700;transform:scaleX(0.9229);">Total Sales and Margin</span>
<span class="t" style="left:1495.00px;top:325px;font-size:35.40px;color:#595959;transform:scaleX(0.8989);">Sales</span>
<span class="t" style="left:1493.80px;top:380px;font-size:45.00px;color:#f93f17;transform:scaleX(0.9554);">104.9M</span>
<svg class="a" style="left:1648.00px;top:394.00px;" width="10.00" height="6.00" viewBox="0 0 10 6"><path d="M0.2 0.4 H9.6 L4.9 5.2 Z" fill="#f93f17"/></svg>
<span class="t" style="left:1668.10px;top:368px;font-size:21.80px;color:#3ec045;transform:scaleX(0.9819);">43.25M</span>
<svg class="a" style="left:1744.60px;top:382.80px;" width="6.00" height="4.00" viewBox="0 0 6 4"><path d="M0.2 3.4 L2.8 0.4 L5.4 3.4 Z" fill="#3ec045"/></svg>
<span class="t" style="left:1669.20px;top:393px;font-size:17.40px;color:#595959;transform:scaleX(0.9288);">Margin</span>
<div class="a" style="left:1967.00px;top:208.00px;width:304.00px;height:270.00px;background:#fff;border:1px solid #d3d3d3;border-radius:5px;box-sizing:border-box;"></div>
<span class="t" style="left:1983.70px;top:220px;font-size:23.00px;color:#404040;font-weight:700;transform:scaleX(0.9363);">Profit Margin</span>
<span class="t" style="left:1986.40px;top:307px;font-size:14.40px;color:#595959;transform:scaleX(0.9337);">-50.0%</span>
<span class="t" style="left:2214.40px;top:307px;font-size:14.40px;color:#595959;transform:scaleX(0.9356);">50.0%</span>
<div class="a" style="left:1985.00px;top:354.00px;width:267.80px;height:1.00px;background:#c8c8c8;"></div>
<div class="a" style="left:2251.80px;top:342.00px;width:1.00px;height:13.00px;background:#c8c8c8;"></div>
<div class="a" style="left:1986.00px;top:359.00px;width:165.00px;height:21.00px;background:#87205d;"></div>
<div class="a" style="left:2151.00px;top:359.00px;width:102.00px;height:21.00px;background:#006580;"></div>
<div class="a" style="left:2228.20px;top:360.00px;width:2.80px;height:19.00px;background:rgba(255,250,250,0.86);"></div>
<span class="t" style="left:2199.20px;top:388px;font-size:19.60px;color:#404040;transform:scaleX(0.9573);">41.3%</span>
<div class="a" style="left:1493.00px;top:490.00px;width:857.00px;height:458.00px;background:#fff;border:1px solid #d3d3d3;border-radius:5px;box-sizing:border-box;"></div>
<span class="t" style="left:1509.20px;top:502px;font-size:23.00px;color:#404040;font-weight:700;transform:scaleX(0.9458);">Quarterly Trend</span>
<svg class="a" style="left:0;top:0" width="2364" height="1337"><rect x="1604" y="555.25" width="635.6" height="1.3" fill="#e4e4e4"/><rect x="1592.2" y="555.25" width="12" height="1.3" fill="#cccccc"/><rect x="1604" y="671.95" width="635.6" height="1.3" fill="#e4e4e4"/><rect x="1592.2" y="671.95" width="12" height="1.3" fill="#cccccc"/><rect x="1604" y="787.55" width="635.6" height="1.3" fill="#e4e4e4"/><rect x="1592.2" y="787.55" width="12" height="1.3" fill="#cccccc"/><rect x="1604" y="901.95" width="635.6" height="1.3" fill="#e4e4e4"/><rect x="1592.2" y="901.95" width="12" height="1.3" fill="#cccccc"/><rect x="1603.9" y="555.3" width="1.3" height="348" fill="#c8c8c8"/><polyline points="1684.6,661.8 1843.5,778.8 2002.4,754.1 2161.4,796.0" fill="none" stroke="#10cfc9" stroke-width="2" stroke-opacity="0.78"/><polyline points="1684.6,814.3 1843.5,723.5 2002.4,784.0 2161.4,818.1" fill="none" stroke="#006580" stroke-width="2" stroke-opacity="0.78"/><polyline points="1684.6,723.8 1843.5,739.9" fill="none" stroke="#87205d" stroke-width="2" stroke-opacity="0.78"/><circle cx="1684.6" cy="661.8" r="4.4" fill="#10cfc9"/><circle cx="1843.5" cy="778.8" r="4.4" fill="#10cfc9"/><circle cx="2002.4" cy="754.1" r="4.4" fill="#10cfc9"/><circle cx="2161.4" cy="796.0" r="4.4" fill="#10cfc9"/><circle cx="1684.6" cy="814.3" r="4.4" fill="#006580"/><circle cx="1843.5" cy="723.5" r="4.4" fill="#006580"/><circle cx="2002.4" cy="784.0" r="4.4" fill="#006580"/><circle cx="2161.4" cy="818.1" r="4.4" fill="#006580"/><circle cx="1684.6" cy="723.8" r="4.4" fill="#87205d"/><circle cx="1843.5" cy="739.9" r="4.4" fill="#87205d"/><rect x="2253" y="621.20" width="18" height="1.8" fill="#006580"/><circle cx="2262" cy="622.10" r="4.3" fill="#006580"/><rect x="2253" y="652.40" width="18" height="1.8" fill="#10cfc9"/><circle cx="2262" cy="653.30" r="4.3" fill="#10cfc9"/><rect x="2253" y="684.10" width="18" height="1.8" fill="#87205d"/><circle cx="2262" cy="685.00" r="4.3" fill="#87205d"/></svg>
<span class="t" style="left:1555.80px;top:547px;font-size:17.00px;color:#595959;transform:scaleX(0.9072);">14M</span>
<span class="t" style="left:1555.80px;top:653px;font-size:17.00px;color:#595959;transform:scaleX(0.9072);">12M</span>
<span class="t" style="left:1555.80px;top:769px;font-size:17.00px;color:#595959;transform:scaleX(0.9072);">10M</span>
<span class="t" style="left:1565.20px;top:884px;font-size:17.00px;color:#595959;transform:scaleX(0.8723);">8M</span>
<span class="t" style="left:1509.74px;top:705.00px;font-size:17.00px;color:#595959;transform-origin:50% 25px;transform:rotate(-90deg) scaleX(0.9077);">Sales</span>
<span class="t" style="left:1674.30px;top:908px;font-size:17.00px;color:#595959;transform:scaleX(0.9084);">Q1</span>
<span class="t" style="left:1833.20px;top:908px;font-size:17.00px;color:#595959;transform:scaleX(0.9084);">Q2</span>
<span class="t" style="left:1992.10px;top:908px;font-size:17.00px;color:#595959;transform:scaleX(0.9084);">Q3</span>
<span class="t" style="left:2151.10px;top:908px;font-size:17.00px;color:#595959;transform:scaleX(0.9084);">Q4</span>
<span class="t" style="left:2253.40px;top:561px;font-size:20.40px;color:#404040;transform:scaleX(0.9559);">Year</span>
<span class="t" style="left:2283.30px;top:603px;font-size:17.20px;color:#595959;">2012</span>
<span class="t" style="left:2283.30px;top:634px;font-size:17.20px;color:#595959;">2013</span>
<span class="t" style="left:2283.30px;top:666px;font-size:17.20px;color:#595959;">2014</span>
<div class="a" style="left:781.00px;top:960.00px;width:1569.00px;height:364.00px;background:#fff;border:1px solid #d3d3d3;border-radius:5px;box-sizing:border-box;"></div>
<span class="t" style="left:797.60px;top:972px;font-size:23.00px;color:#404040;font-weight:700;transform:scaleX(0.9077);">Sales Trend</span>
<svg class="a" style="left:0;top:0" width="2364" height="1337"><rect x="883.4" y="1024.45" width="1367" height="1.3" fill="#e4e4e4"/><rect x="871.4" y="1024.45" width="12" height="1.3" fill="#cccccc"/><rect x="883.4" y="1095.55" width="1367" height="1.3" fill="#e4e4e4"/><rect x="871.4" y="1095.55" width="12" height="1.3" fill="#cccccc"/><rect x="883.4" y="1165.95" width="1367" height="1.3" fill="#e4e4e4"/><rect x="871.4" y="1165.95" width="12" height="1.3" fill="#cccccc"/><rect x="883.4" y="1235.95" width="1367" height="1.3" fill="#e4e4e4"/><rect x="871.4" y="1235.95" width="12" height="1.3" fill="#cccccc"/><rect x="2250.6" y="1024.45" width="12" height="1.3" fill="#cccccc"/><rect x="2250.6" y="1129.95" width="12" height="1.3" fill="#cccccc"/><rect x="2250.6" y="1235.95" width="12" height="1.3" fill="#cccccc"/><rect x="882.6" y="1024.5" width="1.3" height="212.8" fill="#cccccc"/><rect x="2250" y="1024.5" width="1.3" height="212.8" fill="#cccccc"/><rect x="882.6" y="1236" width="1368.6" height="1.4" fill="#cccccc"/><rect x="891.00" y="1175.00" width="31.80" height="61.40" fill="#006580"/><rect x="936.60" y="1101.60" width="31.80" height="134.80" fill="#006580"/><rect x="982.20" y="1100.60" width="31.80" height="135.80" fill="#006580"/><rect x="1027.80" y="1108.70" width="31.80" height="127.70" fill="#006580"/><rect x="1073.40" y="1125.00" width="31.80" height="111.40" fill="#006580"/><rect x="1119.00" y="1087.70" width="31.80" height="148.70" fill="#006580"/><rect x="1164.60" y="1148.60" width="31.80" height="87.80" fill="#006580"/><rect x="1210.20" y="1104.00" width="31.80" height="132.40" fill="#006580"/><rect x="1255.80" y="1106.00" width="31.80" height="130.40" fill="#006580"/><rect x="1301.40" y="1130.70" width="31.80" height="105.70" fill="#006580"/><rect x="1347.00" y="1113.50" width="31.80" height="122.90" fill="#006580"/><rect x="1392.60" y="1135.10" width="31.80" height="101.30" fill="#006580"/><rect x="1438.20" y="1076.90" width="31.80" height="159.50" fill="#006580"/><rect x="1483.80" y="1120.20" width="31.80" height="116.20" fill="#006580"/><rect x="1529.40" y="1087.40" width="31.80" height="149.00" fill="#006580"/><rect x="1575.00" y="1149.50" width="31.80" height="86.90" fill="#006580"/><rect x="1620.60" y="1113.30" width="31.80" height="123.10" fill="#006580"/><rect x="1666.20" y="1092.90" width="31.80" height="143.50" fill="#006580"/><rect x="1711.80" y="1142.50" width="31.80" height="93.90" fill="#006580"/><rect x="1757.40" y="1104.10" width="31.80" height="132.30" fill="#006580"/><rect x="1803.00" y="1093.90" width="31.80" height="142.50" fill="#006580"/><rect x="1848.60" y="1135.00" width="31.80" height="101.40" fill="#006580"/><rect x="1894.20" y="1109.20" width="31.80" height="127.20" fill="#006580"/><rect x="1939.80" y="1121.80" width="31.80" height="114.60" fill="#006580"/><rect x="1985.40" y="1092.90" width="31.80" height="143.50" fill="#006580"/><rect x="2031.00" y="1125.20" width="31.80" height="111.20" fill="#006580"/><rect x="2076.60" y="1104.10" width="31.80" height="132.30" fill="#006580"/><rect x="2122.20" y="1111.90" width="31.80" height="124.50" fill="#006580"/><rect x="2167.80" y="1112.90" width="31.80" height="123.50" fill="#006580"/><rect x="2213.40" y="1107.10" width="31.80" height="129.30" fill="#006580"/><polyline points="906.9,1165.9 952.5,1140.5 998.1,1132.7 1043.7,1144.6 1089.3,1147.3 1134.9,1128.3 1180.5,1121.9 1226.1,1140.9 1271.7,1130.4 1317.3,1157.8 1362.9,1154.7 1408.5,1113.8 1454.1,1119.9 1499.7,1108.0 1545.3,1122.2 1590.9,1097.6 1636.5,1108.2 1682.1,1110.5 1727.7,1092.2 1773.3,1101.4 1818.9,1117.3 1864.5,1113.6 1910.1,1124.1 1955.7,1116.0 2001.3,1105.1 2046.9,1070.4 2092.5,1092.5 2138.1,1099.7 2183.7,1099.3 2229.3,1086.7" fill="none" stroke="#87205d" stroke-width="1.5"/></svg>
<span class="t" style="left:843.40px;top:1017px;font-size:17.00px;color:#595959;transform:scaleX(0.8977);">6M</span>
<span class="t" style="left:843.60px;top:1078px;font-size:17.00px;color:#595959;transform:scaleX(0.8892);">4M</span>
<span class="t" style="left:843.40px;top:1148px;font-size:17.00px;color:#595959;transform:scaleX(0.8977);">2M</span>
<span class="t" style="left:856.20px;top:1218px;font-size:17.00px;color:#595959;transform:scaleX(0.8885);">0</span>
<span class="t" style="left:2270.20px;top:1017px;font-size:17.00px;color:#595959;transform:scaleX(0.9308);">50</span>
<span class="t" style="left:2270.20px;top:1113px;font-size:17.00px;color:#595959;transform:scaleX(0.9308);">40</span>
<span class="t" style="left:2270.20px;top:1218px;font-size:17.00px;color:#595959;transform:scaleX(0.9308);">30</span>
<span class="t" style="left:798.14px;top:1107.00px;font-size:17.00px;color:#595959;transform-origin:50% 25px;transform:rotate(-90deg) scaleX(0.9077);">Sales</span>
<span class="t" style="left:2269.04px;top:1107.00px;font-size:17.00px;color:#404040;transform-origin:50% 25px;transform:rotate(90deg) scaleX(0.9383);">Margin (%)</span>
<span class="t" style="left:842.21px;top:1231.00px;font-size:17.00px;color:#595959;transform-origin:100% 25px;transform:rotate(-38deg) scaleX(0.9300);">2012-Jan</span>
<span class="t" style="left:885.93px;top:1231.00px;font-size:17.00px;color:#595959;transform-origin:100% 25px;transform:rotate(-38deg) scaleX(0.9300);">2012-Feb</span>
<span class="t" style="left:931.54px;top:1231.00px;font-size:17.00px;color:#595959;transform-origin:100% 25px;transform:rotate(-38deg) scaleX(0.9300);">2012-Mar</span>
<span class="t" style="left:979.97px;top:1231.00px;font-size:17.00px;color:#595959;transform-origin:100% 25px;transform:rotate(-38deg) scaleX(0.9300);">2012-Apr</span>
<span class="t" style="left:1019.90px;top:1231.00px;font-size:17.00px;color:#595959;transform-origin:100% 25px;transform:rotate(-38deg) scaleX(0.9300);">2012-May</span>
<span class="t" style="left:1070.21px;top:1231.00px;font-size:17.00px;color:#595959;transform-origin:100% 25px;transform:rotate(-38deg) scaleX(0.9300);">2012-Jun</span>
<span class="t" style="left:1121.49px;top:1231.00px;font-size:17.00px;color:#595959;transform-origin:100% 25px;transform:rotate(-38deg) scaleX(0.9300);">2012-Jul</span>
<span class="t" style="left:1158.57px;top:1231.00px;font-size:17.00px;color:#595959;transform-origin:100% 25px;transform:rotate(-38deg) scaleX(0.9300);">2012-Aug</span>
<span class="t" style="left:1204.17px;top:1231.00px;font-size:17.00px;color:#595959;transform-origin:100% 25px;transform:rotate(-38deg) scaleX(0.9300);">2012-Sep</span>
<span class="t" style="left:1253.57px;top:1231.00px;font-size:17.00px;color:#595959;transform-origin:100% 25px;transform:rotate(-38deg) scaleX(0.9300);">2012-Oct</span>
<span class="t" style="left:1295.39px;top:1231.00px;font-size:17.00px;color:#595959;transform-origin:100% 25px;transform:rotate(-38deg) scaleX(0.9300);">2012-Nov</span>
<span class="t" style="left:1340.99px;top:1231.00px;font-size:17.00px;color:#595959;transform-origin:100% 25px;transform:rotate(-38deg) scaleX(0.9300);">2012-Dec</span>
<span class="t" style="left:1389.41px;top:1231.00px;font-size:17.00px;color:#595959;transform-origin:100% 25px;transform:rotate(-38deg) scaleX(0.9300);">2013-Jan</span>
<span class="t" style="left:1433.13px;top:1231.00px;font-size:17.00px;color:#595959;transform-origin:100% 25px;transform:rotate(-38deg) scaleX(0.9300);">2013-Feb</span>
<span class="t" style="left:1478.74px;top:1231.00px;font-size:17.00px;color:#595959;transform-origin:100% 25px;transform:rotate(-38deg) scaleX(0.9300);">2013-Mar</span>
<span class="t" style="left:1527.17px;top:1231.00px;font-size:17.00px;color:#595959;transform-origin:100% 25px;transform:rotate(-38deg) scaleX(0.9300);">2013-Apr</span>
<span class="t" style="left:1567.10px;top:1231.00px;font-size:17.00px;color:#595959;transform-origin:100% 25px;transform:rotate(-38deg) scaleX(0.9300);">2013-May</span>
<span class="t" style="left:1617.41px;top:1231.00px;font-size:17.00px;color:#595959;transform-origin:100% 25px;transform:rotate(-38deg) scaleX(0.9300);">2013-Jun</span>
<span class="t" style="left:1668.69px;top:1231.00px;font-size:17.00px;color:#595959;transform-origin:100% 25px;transform:rotate(-38deg) scaleX(0.9300);">2013-Jul</span>
<span class="t" style="left:1705.77px;top:1231.00px;font-size:17.00px;color:#595959;transform-origin:100% 25px;transform:rotate(-38deg) scaleX(0.9300);">2013-Aug</span>
<span class="t" style="left:1751.37px;top:1231.00px;font-size:17.00px;color:#595959;transform-origin:100% 25px;transform:rotate(-38deg) scaleX(0.9300);">2013-Sep</span>
<span class="t" style="left:1800.77px;top:1231.00px;font-size:17.00px;color:#595959;transform-origin:100% 25px;transform:rotate(-38deg) scaleX(0.9300);">2013-Oct</span>
<span class="t" style="left:1842.59px;top:1231.00px;font-size:17.00px;color:#595959;transform-origin:100% 25px;transform:rotate(-38deg) scaleX(0.9300);">2013-Nov</span>
<span class="t" style="left:1888.19px;top:1231.00px;font-size:17.00px;color:#595959;transform-origin:100% 25px;transform:rotate(-38deg) scaleX(0.9300);">2013-Dec</span>
<span class="t" style="left:1936.61px;top:1231.00px;font-size:17.00px;color:#595959;transform-origin:100% 25px;transform:rotate(-38deg) scaleX(0.9300);">2014-Jan</span>
<span class="t" style="left:1980.33px;top:1231.00px;font-size:17.00px;color:#595959;transform-origin:100% 25px;transform:rotate(-38deg) scaleX(0.9300);">2014-Feb</span>
<span class="t" style="left:2025.94px;top:1231.00px;font-size:17.00px;color:#595959;transform-origin:100% 25px;transform:rotate(-38deg) scaleX(0.9300);">2014-Mar</span>
<span class="t" style="left:2074.37px;top:1231.00px;font-size:17.00px;color:#595959;transform-origin:100% 25px;transform:rotate(-38deg) scaleX(0.9300);">2014-Apr</span>
<span class="t" style="left:2114.30px;top:1231.00px;font-size:17.00px;color:#595959;transform-origin:100% 25px;transform:rotate(-38deg) scaleX(0.9300);">2014-May</span>
<span class="t" style="left:2164.61px;top:1231.00px;font-size:17.00px;color:#595959;transform-origin:100% 25px;transform:rotate(-38deg) scaleX(0.9300);">2014-Jun</span>
</div></body></html>
